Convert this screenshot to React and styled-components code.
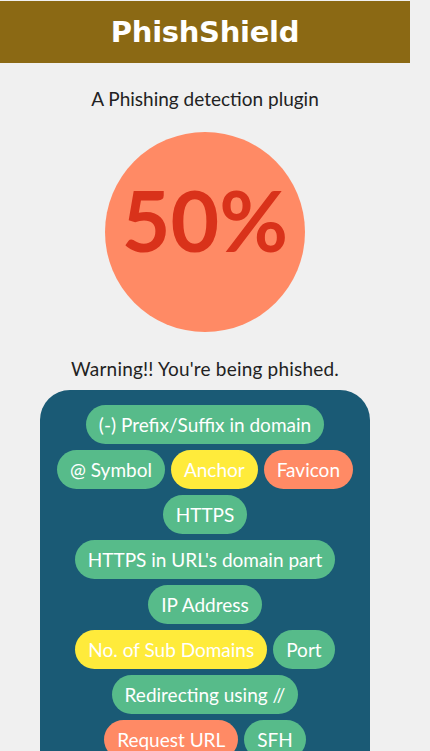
import styled, { createGlobalStyle } from "styled-components";

const GlobalStyle = createGlobalStyle`
  html, body {
    margin: 0;
    padding: 0;
    background-color: #f0f0f0;
  }

  body {
    font-family: Lato, "Open Sans", sans-serif;
    color: #222;
  }
`;

const Page = styled.div`
  width: 410px;
  padding-top: 1px;
  padding-bottom: 560px;
`;

const Header = styled.header`
  display: flex;
  justify-content: center;
  align-items: center;
  height: 62px;
  background-color: #8b6914;
`;

const Title = styled.h1`
  margin: 0;
  font-family: "DejaVu Sans", sans-serif;
  font-size: 29px;
  font-weight: 700;
  letter-spacing: -0.3px;
  color: #fff;
`;

const Subtitle = styled.p`
  margin: 24px 0 0;
  text-align: center;
  font-size: 19px;
`;

const ScoreCircle = styled.div`
  display: flex;
  justify-content: center;
  align-items: flex-start;
  width: 200px;
  height: 200px;
  margin: 22px auto 0;
  border-radius: 50%;
  background-color: #ff8a65;
  color: #d9321a;
  font-size: 84px;
  font-weight: 700;
  line-height: 1;
  padding-top: 46px;
  box-sizing: border-box;
`;

const Warning = styled.p`
  margin: 25px 0 0;
  text-align: center;
  font-size: 19px;
  letter-spacing: 0.2px;
`;

const Panel = styled.div`
  display: flex;
  flex-wrap: wrap;
  justify-content: center;
  gap: 6px;
  width: 330px;
  margin: 10px auto 0;
  padding: 15px 14px 20px;
  box-sizing: border-box;
  border-radius: 30px;
  background-color: #1a5a75;
`;

const chipColors = {
  safe: "#57bb8a",
  suspicious: "#ffeb3b",
  phishing: "#ff8a65",
};

const Chip = styled.span`
  display: inline-flex;
  align-items: center;
  height: 39px;
  padding: 0 13px;
  border-radius: 20px;
  background-color: ${(p) => chipColors[p.$status]};
  color: #fff;
  font-size: 19px;
  white-space: nowrap;
`;

const features = [
  ["(-) Prefix/Suffix in domain", "safe"],
  ["@ Symbol", "safe"],
  ["Anchor", "suspicious"],
  ["Favicon", "phishing"],
  ["HTTPS", "safe"],
  ["HTTPS in URL's domain part", "safe"],
  ["IP Address", "safe"],
  ["No. of Sub Domains", "suspicious"],
  ["Port", "safe"],
  ["Redirecting using //", "safe"],
  ["Request URL", "phishing"],
  ["SFH", "safe"],
  ["Script & Link", "suspicious"],
  ["Shortening Service", "safe"],
  ["URL Length", "phishing"],
];

function App() {
  return (
    <>
      <GlobalStyle />
      <Page>
        <Header>
          <Title>PhishShield</Title>
        </Header>
        <Subtitle>A Phishing detection plugin</Subtitle>
        <ScoreCircle>50%</ScoreCircle>
        <Warning>Warning!! You're being phished.</Warning>
        <Panel>
          {features.map(([name, status]) => (
            <Chip key={name} $status={status}>
              {name}
            </Chip>
          ))}
        </Panel>
      </Page>
    </>
  );
}

export default App;
